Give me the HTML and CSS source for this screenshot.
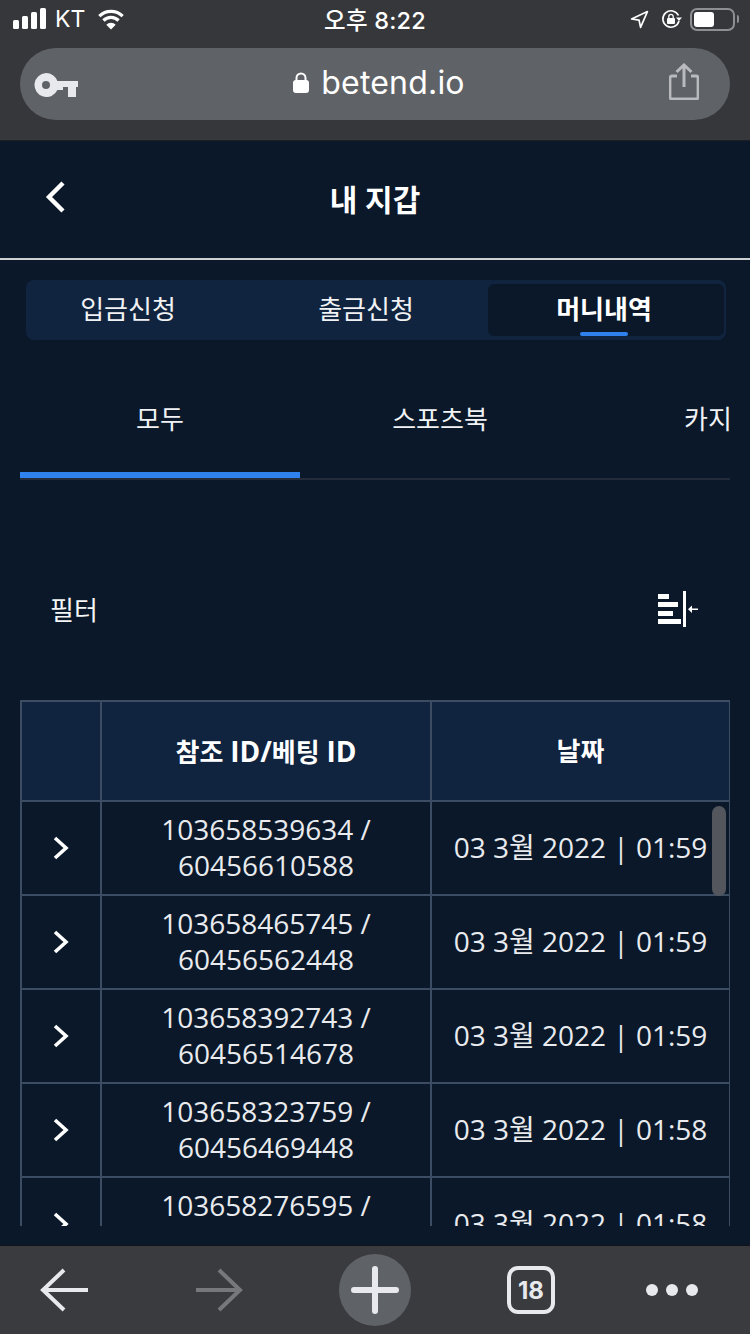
FILE: index.html
```html
<!DOCTYPE html>
<html lang="ko">
<head>
<meta charset="utf-8">
<title>내 지갑</title>
<link rel="stylesheet" href="styles.css">
</head>
<body>
<div class="app">
  <header class="chrome">
    <div class="status">
      <div class="status-left">
        <svg class="signal" width="34" height="24" viewBox="0 0 34 24"><rect x="0" y="13" width="6" height="9" rx="1.500"/><rect x="9" y="9" width="6" height="13" rx="1.500"/><rect x="18" y="5" width="6" height="17" rx="1.500"/><rect x="27" y="1" width="6" height="21" rx="1.500"/></svg>
        <span class="carrier">KT</span>
        <svg class="wifi" width="30" height="22" viewBox="1.500 0 27 21.500"><path d="M15 21l-4.600-4.700a6.600 6.600 0 0 1 9.200 0z" fill="#fff"/><path d="M7.600 13.200a10.600 10.600 0 0 1 14.800 0M3.600 8.900a16.400 16.400 0 0 1 22.800 0" transform="translate(0 -1)" fill="none" stroke="#fff" stroke-width="3.200"/></svg>
      </div>
      <div class="clock">오후 8:22</div>
      <div class="status-right">
        <svg class="locate" width="19" height="19" viewBox="0 0 18 18"><path d="M1.500 8.500L16.500 1.500 10 16.500 8.600 9.600z" fill="none" stroke="#fff" stroke-width="1.600" stroke-linejoin="round"/></svg>
        <svg width="22" height="20" viewBox="0 0 22 20"><path d="M17.500 6.500A8.200 8.200 0 1 0 18 12" fill="none" stroke="#fff" stroke-width="1.600"/><path d="M15 8.500h6l-3 3.500z" fill="#fff"/><rect x="6" y="9" width="8" height="6" rx="1" fill="#fff"/><path d="M7.800 9V7.500a2.200 2.200 0 0 1 4.400 0V9" fill="none" stroke="#fff" stroke-width="1.300"/></svg>
        <div class="battery"><div class="battery-fill"></div></div>
        <div class="battery-cap"></div>
      </div>
    </div>
    <div class="urlbar">
      <svg class="key" width="44" height="24" viewBox="0 0 44 24"><path fill-rule="evenodd" d="M12 0a12 12 0 0 1 11.400 8H44v6h-2v10h-8v-10h-5v3h-5.600A12 12 0 1 1 12 0zm0 8a4 4 0 1 0 0 8 4 4 0 0 0 0-8z" fill="#e8e9ed"/></svg>
      <div class="address">
        <svg width="16" height="21" viewBox="0 0 16 21"><rect x="0" y="8" width="16" height="13" rx="3" fill="#fff"/><path d="M3.500 9V6a4.500 4.500 0 0 1 9 0v3" fill="none" stroke="#fff" stroke-width="2"/></svg>
        <span>betend.io</span>
      </div>
      <svg class="share" width="30" height="37" viewBox="0 0 30 37"><path d="M8 13H3a2 2 0 0 0-2 2v19a2 2 0 0 0 2 2h24a2 2 0 0 0 2-2V15a2 2 0 0 0-2-2h-5" fill="none" stroke="#b8babd" stroke-width="2.800"/><path d="M15 24V2M7.500 9L15 2l7.500 7" fill="none" stroke="#b8babd" stroke-width="3"/></svg>
    </div>
  </header>

  <main class="page">
    <div class="title-bar">
      <svg class="back" width="22" height="34" viewBox="0 0 22 34"><path d="M18 3L4 17l14 14" fill="none" stroke="#fff" stroke-width="4.400"/></svg>
      <h1>내 지갑</h1>
    </div>

    <nav class="segments">
      <div class="segment">입금신청</div>
      <div class="segment second">출금신청</div>
      <div class="segment active">머니내역</div>
    </nav>

    <nav class="subtabs">
      <div class="subtab active">모두</div>
      <div class="subtab">스포츠북</div>
      <div class="subtab cut">카지</div>
    </nav>

    <div class="filter">
      <span>필터</span>
      <svg width="42" height="36" viewBox="0 0 42 36"><g fill="#fff"><rect x="1" y="3" width="11" height="5"/><rect x="1" y="11" width="20" height="5"/><rect x="1" y="20" width="15" height="5"/><rect x="1" y="28" width="23" height="5"/><rect x="26" y="0" width="3" height="36"/><path d="M35 17.500h6v1.500h-6v3l-4-3.700 4-3.700z"/></g></svg>
    </div>

    <div class="table-wrap">
      <table>
        <colgroup><col class="c1"><col class="c2"><col class="c3"></colgroup>
        <thead>
          <tr><th></th><th>참조 <span class="latin">ID/</span>베팅 <span class="latin">ID</span></th><th>날짜</th></tr>
        </thead>
        <tbody>
          <tr><td><svg class="chev" width="18" height="26" viewBox="0 0 18 26"><path d="M3 3l11 10L3 23" fill="none" stroke="#fff" stroke-width="3.600"/></svg></td><td>103658539634 /<br>60456610588</td><td>03 3월 2022 | 01:59</td></tr>
          <tr><td><svg class="chev" width="18" height="26" viewBox="0 0 18 26"><path d="M3 3l11 10L3 23" fill="none" stroke="#fff" stroke-width="3.600"/></svg></td><td>103658465745 /<br>60456562448</td><td>03 3월 2022 | 01:59</td></tr>
          <tr><td><svg class="chev" width="18" height="26" viewBox="0 0 18 26"><path d="M3 3l11 10L3 23" fill="none" stroke="#fff" stroke-width="3.600"/></svg></td><td>103658392743 /<br>60456514678</td><td>03 3월 2022 | 01:59</td></tr>
          <tr><td><svg class="chev" width="18" height="26" viewBox="0 0 18 26"><path d="M3 3l11 10L3 23" fill="none" stroke="#fff" stroke-width="3.600"/></svg></td><td>103658323759 /<br>60456469448</td><td>03 3월 2022 | 01:58</td></tr>
          <tr><td><svg class="chev" width="18" height="26" viewBox="0 0 18 26"><path d="M3 3l11 10L3 23" fill="none" stroke="#fff" stroke-width="3.600"/></svg></td><td>103658276595 /<br>60456431120</td><td>03 3월 2022 | 01:58</td></tr>
        </tbody>
      </table>
      <div class="scrollbar"></div>
    </div>
  </main>

  <footer class="toolbar">
    <svg width="48" height="44" viewBox="0 0 48 44"><path d="M48 22H3M24 2L3 22l21 20" fill="none" stroke="#e8e9ed" stroke-width="4"/></svg>
    <svg width="48" height="44" viewBox="0 0 48 44"><path d="M0 22h44M23 2l21 20-21 20" fill="none" stroke="#77787b" stroke-width="4"/></svg>
    <div class="plus"><svg width="48" height="48" viewBox="0 0 48 48"><path d="M3 24h42M24 3v42" fill="none" stroke="#e8e9ed" stroke-width="6" stroke-linecap="round"/></svg></div>
    <div class="tabs-count">18</div>
    <div class="dots"><i></i><i></i><i></i></div>
  </footer>
</div>
</body>
</html>
```
FILE: styles.css
```css
* { box-sizing: border-box; }
html, body { margin: 0; padding: 0; }
body {
  width: 750px;
  height: 1334px;
  overflow: hidden;
  background: #0a1829;
  color: #fff;
  font-family: "Open Sans", "Noto Sans CJK KR", sans-serif;
}
.app { display: flex; flex-direction: column; height: 1334px; }

/* browser chrome */
.chrome {
  height: 141px;
  flex: none;
  background: #36373b;
  border-bottom: 1px solid #1d1f24;
  padding: 2px 20px 0;
  font-family: Inter, "Noto Sans CJK KR", sans-serif;
}
.status {
  display: grid;
  grid-template-columns: 1fr auto 1fr;
  align-items: center;
  height: 26px;
  margin: 0 -9px 20px -7px;
}
.status-left { display: flex; align-items: center; gap: 8px; }
.signal { fill: #fff; }
.carrier { font-size: 23px; font-weight: 400; }
.wifi { margin-left: 3px; }
.clock { font-size: 23.5px; font-weight: 500; letter-spacing: 0.2px; margin-left: -2px; }
.status-right { display: flex; align-items: center; justify-content: flex-end; gap: 7px; }
.locate { margin-right: 5px; }
.battery {
  width: 45px;
  height: 23px;
  border: 2px solid #8e8f92;
  border-radius: 7px;
  padding: 2px;
}
.battery-fill { width: 20px; height: 100%; background: #fff; border-radius: 3px; }
.battery-cap { width: 2px; height: 8px; background: #8e8f92; margin-left: -5px; border-radius: 0 2px 2px 0; }

.urlbar {
  height: 72px;
  border-radius: 36px;
  background: #5f6367;
  display: flex;
  align-items: center;
  justify-content: space-between;
  padding: 0 31px 0 14px;
}
.address { display: flex; align-items: center; gap: 12px; font-size: 32px; letter-spacing: 0.2px; color: #fff; margin: -4px 0 0 11px; }
.address svg { margin-top: 1px; }
.key { margin-top: 2px; }
.share { margin-top: -5px; }

/* page */
.page {
  flex: 1;
  min-height: 0;
  display: flex;
  flex-direction: column;
}
.title-bar {
  height: 119px;
  flex: none;
  border-bottom: 2px solid #cfd0d2;
  display: flex;
  align-items: center;
  justify-content: center;
  position: relative;
}
.title-bar h1 { margin: 0; font-size: 30px; font-weight: 700; line-height: 1; }
.back { position: absolute; left: 45px; top: 39px; }

.segments {
  flex: none;
  display: grid;
  grid-template-columns: 196px 262px 236px;
  width: 700px;
  height: 60px;
  margin: 20px 0 0 26px;
  padding: 4px 2px 4px 4px;
  background: #10243f;
  border-radius: 8px;
}
.segment {
  display: flex;
  align-items: center;
  justify-content: center;
  font-size: 26px;
  color: #f0f2f4;
  padding-bottom: 4px;
  position: relative;
}
.segment.second { padding-left: 18px; }
.segment.active {
  background: #0a1829;
  border-radius: 6px;
  font-weight: 700;
  color: #fff;
  padding-right: 4px;
}
.segment.active::after {
  content: "";
  position: absolute;
  left: 92px;
  bottom: 0;
  width: 48px;
  height: 4px;
  border-radius: 2px;
  background: #2f81ee;
}

.subtabs {
  flex: none;
  display: flex;
  width: 710px;
  height: 140px;
  margin-left: 20px;
  overflow: hidden;
  border-bottom: 2px solid #232c3b;
}
.subtab {
  flex: none;
  width: 280px;
  height: 138px;
  padding-top: 59px;
  text-align: center;
  font-size: 26px;
  color: #f0f2f4;
}
.subtab.active { border-bottom: 6px solid #2f81ee; }
.subtab.cut { width: 150px; padding-left: 104px; text-align: left; white-space: nowrap; }

.filter {
  flex: none;
  height: 220px;
  padding: 38px 51px 0 50px;
  display: flex;
  align-items: center;
  justify-content: space-between;
  font-size: 26px;
  color: #f4f5f6;
}

.table-wrap {
  flex: none;
  position: relative;
  width: 710px;
  height: 526px;
  margin-left: 20px;
  overflow: hidden;
}
table {
  width: 709px;
  border-collapse: collapse;
  table-layout: fixed;
  font-size: 28px;
  line-height: 36px;
  color: #e9ebee;
  text-align: center;
}
.c1 { width: 80px; }
.c2 { width: 330px; }
.c3 { width: 299px; }
th, td { border: 2px solid #3c4d63; padding: 0; }
th { height: 100px; background: #10243f; font-size: 26px; font-weight: 700; color: #fff; }
.latin { font-size: 28px; }
td { height: 94px; }
td + td { padding-bottom: 2px; }
.chev { display: block; margin: 0 auto 0 30px; }

.scrollbar {
  position: absolute;
  right: 4px;
  top: 106px;
  width: 14px;
  height: 90px;
  border-radius: 7px;
  background: #53575d;
}

/* bottom toolbar */
.toolbar {
  flex: none;
  height: 89px;
  background: #3a3b3f;
  border-top: 1px solid #111318;
  display: grid;
  grid-template-columns: 128px 184px 126px 186px 96px;
  justify-items: center;
  align-items: center;
  font-family: Inter, sans-serif;
}
.plus {
  width: 72px;
  height: 72px;
  border-radius: 50%;
  background: #5f6367;
  display: flex;
  align-items: center;
  justify-content: center;
}
.tabs-count {
  width: 48px;
  height: 48px;
  border: 4px solid #e8e9ed;
  border-radius: 11px;
  display: flex;
  align-items: center;
  justify-content: center;
  font-size: 24px;
  font-weight: 700;
  color: #e8e9ed;
}
.dots { display: flex; gap: 8px; }
.dots i { display: block; width: 12px; height: 12px; border-radius: 50%; background: #e8e9ed; }
```
